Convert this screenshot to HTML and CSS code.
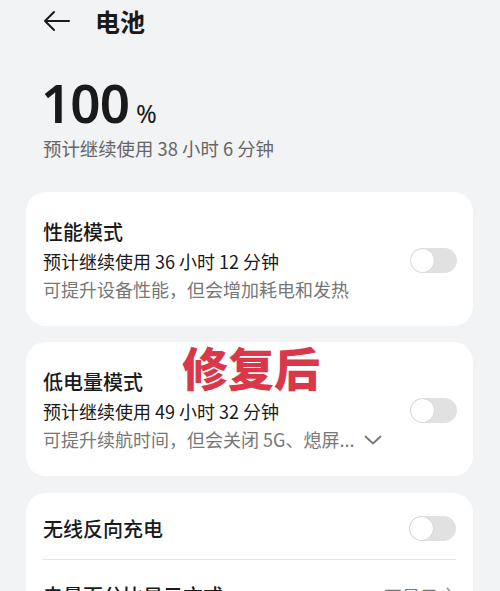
FILE: index.html
```html
<!DOCTYPE html>
<html lang="zh-CN">
<head>
    <meta charset="UTF-8">
    <meta name="viewport" content="width=device-width, initial-scale=1.0">
    <title>电池</title>
    <link rel="stylesheet" href="styles.css">
</head>
<body>
    <div class="page">
        <div class="topbar">
            <svg class="back" width="28" height="22" viewBox="0 0 28 22">
                <path d="M26 11H2M11 2L2 11L11 20" fill="none" stroke="#1a1a1a" stroke-width="2" stroke-linecap="round" stroke-linejoin="round"/>
            </svg>
            <h1>电池</h1>
        </div>

        <div class="level">
            <span class="num">100</span><span class="pct">%</span>
        </div>
        <div class="remain">预计继续使用 38 小时 6 分钟</div>

        <div class="card">
            <div class="row">
                <div class="info">
                    <div class="title">性能模式</div>
                    <div class="sub">预计继续使用 36 小时 12 分钟</div>
                    <div class="desc">可提升设备性能，但会增加耗电和发热</div>
                </div>
                <div class="switch"><span class="knob"></span></div>
            </div>
        </div>

        <div class="card marked">
            <div class="stamp">修复后</div>
            <div class="row">
                <div class="info">
                    <div class="title">低电量模式</div>
                    <div class="sub">预计继续使用 49 小时 32 分钟</div>
                    <div class="desc">可提升续航时间，但会关闭 5G、熄屏...
                        <svg class="chev" width="18" height="10" viewBox="0 0 18 10">
                            <path d="M1.5 1.5L9 8.5L16.5 1.5" fill="none" stroke="#777" stroke-width="1.8" stroke-linecap="round" stroke-linejoin="round"/>
                        </svg>
                    </div>
                </div>
                <div class="switch"><span class="knob"></span></div>
            </div>
        </div>

        <div class="card list">
            <div class="item">
                <div class="title">无线反向充电</div>
                <div class="switch"><span class="knob"></span></div>
            </div>
            <div class="item">
                <div class="title">电量百分比显示方式</div>
                <div class="value">不显示
                    <svg width="10" height="18" viewBox="0 0 10 18">
                        <path d="M1.5 1.5L8.5 9L1.5 16.5" fill="none" stroke="#999" stroke-width="1.8" stroke-linecap="round" stroke-linejoin="round"/>
                    </svg>
                </div>
            </div>
        </div>
    </div>
</body>
</html>
```

FILE: styles.css
```css
body {
    margin: 0;
    padding: 0;
    background-color: #f1f3f5;
    font-family: "Noto Sans CJK SC", "Noto Sans", sans-serif;
    color: #1a1a1a;
    overflow: hidden;
}

.page {
    padding: 0 27px 0 26px;
}

.topbar {
    display: flex;
    align-items: center;
    height: 42px;
    padding-left: 17px;
}

.back {
    margin-right: 24px;
}

.topbar h1 {
    margin: 0;
    font-size: 25px;
    font-weight: 600;
    line-height: 42px;
}

.level {
    margin-top: 32px;
    padding-left: 15px;
    height: 58px;
    display: flex;
    align-items: baseline;
}

.num {
    font-family: "Noto Sans", sans-serif;
    font-size: 53px;
    font-weight: 600;
    letter-spacing: -1px;
    line-height: 58px;
}

.pct {
    font-family: "Noto Sans", sans-serif;
    font-size: 25px;
    margin-left: 7px;
}

.remain {
    padding-left: 17px;
    font-size: 18.4px;
    line-height: 28px;
    color: #666;
    margin-top: 2px;
}

.card {
    background-color: #fff;
    border-radius: 20px;
    margin-top: 30px;
    padding: 0 16px 0 17px;
}

.card + .card {
    margin-top: 16px;
}

.card.marked {
    position: relative;
}

.row {
    display: flex;
    align-items: center;
    justify-content: space-between;
    padding: 25px 0 23px;
}

.title {
    font-size: 20px;
    font-weight: 500;
    line-height: 30px;
}

.sub {
    font-size: 18px;
    line-height: 28px;
}

.desc {
    font-size: 18px;
    line-height: 28px;
    color: #777;
}

.chev {
    margin-left: 6px;
    vertical-align: 2px;
}

.switch {
    width: 47px;
    height: 25px;
    border-radius: 13px;
    background-color: #e1e1e1;
    display: flex;
    align-items: center;
    padding-left: 1px;
    box-sizing: border-box;
}

.knob {
    width: 23px;
    height: 23px;
    border-radius: 50%;
    background-color: #fff;
    box-shadow: 0 0 1px rgba(0, 0, 0, 0.25);
}

.stamp {
    position: absolute;
    left: 156px;
    top: -9px;
    font-size: 46px;
    font-weight: 900;
    color: #d8384a;
}

.card.list {
    margin-top: 17px;
}

.item {
    display: flex;
    align-items: center;
    justify-content: space-between;
    height: 67px;
    padding-top: 5px;
    box-sizing: border-box;
    border-bottom: 1px solid #e6e6e6;
    margin-right: 1px;
}

.item:last-child {
    border-bottom: none;
}

.value {
    display: flex;
    align-items: center;
    gap: 8px;
    font-size: 18px;
    color: #777;
}
```
